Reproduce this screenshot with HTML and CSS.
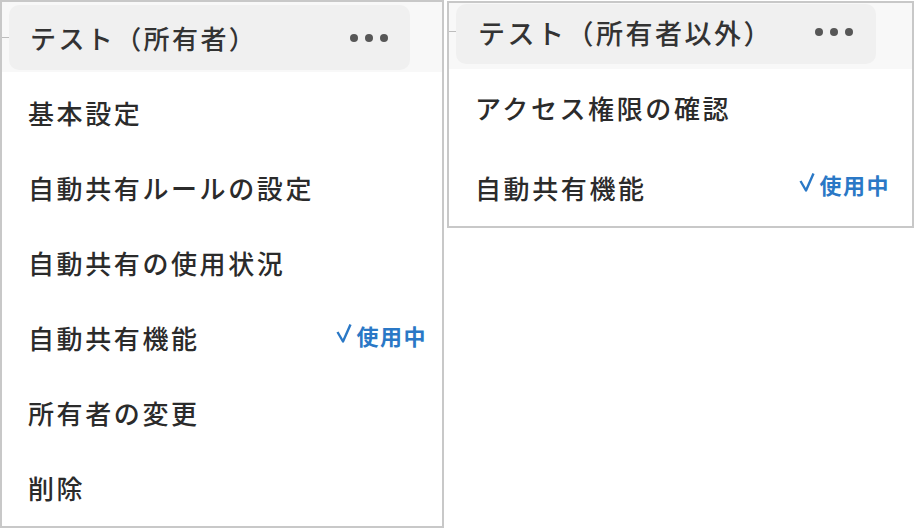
FILE: index.html
```html
<!DOCTYPE html>
<html lang="ja">
<head>
    <meta charset="UTF-8">
    <title>メニュー</title>
    <link rel="stylesheet" href="styles.css">
</head>
<body>
<div class="board">
    <div class="panel owner">
        <div class="panel-head">
            <span class="tick"></span>
            <div class="head-btn">
                <span class="head-title">テスト（所有者）</span>
                <span class="dots"><i></i><i></i><i></i></span>
            </div>
        </div>
        <ul class="menu">
            <li>基本設定</li>
            <li>自動共有ルールの設定</li>
            <li>自動共有の使用状況</li>
            <li>自動共有機能<span class="status"><svg viewBox="0 0 16 20" width="16" height="20"><path d="M1.5 9 L7 18.5 L14.5 1.5" fill="none" stroke="currentColor" stroke-width="2.4" stroke-linejoin="round"/></svg>使用中</span></li>
            <li>所有者の変更</li>
            <li>削除</li>
        </ul>
    </div>

    <div class="panel other">
        <div class="panel-head">
            <span class="tick"></span>
            <div class="head-btn">
                <span class="head-title">テスト（所有者以外）</span>
                <span class="dots"><i></i><i></i><i></i></span>
            </div>
        </div>
        <ul class="menu">
            <li>アクセス権限の確認</li>
            <li>自動共有機能<span class="status"><svg viewBox="0 0 16 20" width="16" height="20"><path d="M1.5 9 L7 18.5 L14.5 1.5" fill="none" stroke="currentColor" stroke-width="2.4" stroke-linejoin="round"/></svg>使用中</span></li>
        </ul>
    </div>
</div>
</body>
</html>
```

FILE: styles.css
```css
body {
    margin: 0;
    background: #ffffff;
    font-family: "Noto Sans CJK JP", "Noto Sans", sans-serif;
    color: #2b2b2b;
}
.board {
    display: flex;
    align-items: flex-start;
    gap: 3px;
}
.panel {
    border: 2px solid #c8c8c8;
    background: #ffffff;
}
.owner {
    width: 440px;
}
.other {
    width: 463px;
    margin-top: 1px;
}
.panel-head {
    position: relative;
    background: #f8f8f8;
    display: flex;
}
.owner .panel-head {
    height: 70px;
    padding: 3px 32px 0 7px;
    box-sizing: border-box;
}
.other .panel-head {
    height: 66px;
    padding: 1px 36px 0 7px;
    box-sizing: border-box;
}
.tick {
    position: absolute;
    left: 0;
    width: 7px;
    height: 1px;
    background: #bdbdbd;
}
.owner .tick {
    top: 35px;
}
.other .tick {
    top: 28px;
}
.head-btn {
    flex: 1;
    display: flex;
    justify-content: space-between;
    align-items: center;
    background: #f0f0f0;
    border-radius: 10px;
}
.owner .head-btn {
    height: 65px;
    padding: 0 22px 0 21px;
}
.other .head-btn {
    height: 60px;
    padding: 0 23px 4px 22px;
    box-sizing: border-box;
}
.head-title {
    font-size: 26px;
    font-weight: 500;
    letter-spacing: 2.4px;
    color: #333333;
}
.other .head-title {
    font-size: 27px;
    letter-spacing: 2.5px;
}
.dots {
    display: flex;
    gap: 7px;
}
.dots i {
    width: 8px;
    height: 8px;
    border-radius: 50%;
    background: #575757;
}
.menu {
    list-style: none;
    margin: 0;
    display: flex;
    flex-direction: column;
}
.owner .menu {
    padding: 20px 15px 19px 26px;
    gap: 35px;
}
.other .menu {
    padding: 18px 22px 19px 26px;
    gap: 40px;
}
.menu li {
    height: 40px;
    display: flex;
    align-items: center;
    justify-content: space-between;
    font-size: 26px;
    font-weight: 500;
    letter-spacing: 2.6px;
    color: #2b2b2b;
}
.status {
    display: flex;
    align-items: center;
    gap: 4px;
    font-size: 22px;
    font-weight: bold;
    letter-spacing: 1.5px;
    color: #2a78c6;
    margin-top: -5px;
}
.other .status {
    font-size: 22px;
    margin-top: -6px;
}
.status svg {
    margin-top: -4px;
}
```
